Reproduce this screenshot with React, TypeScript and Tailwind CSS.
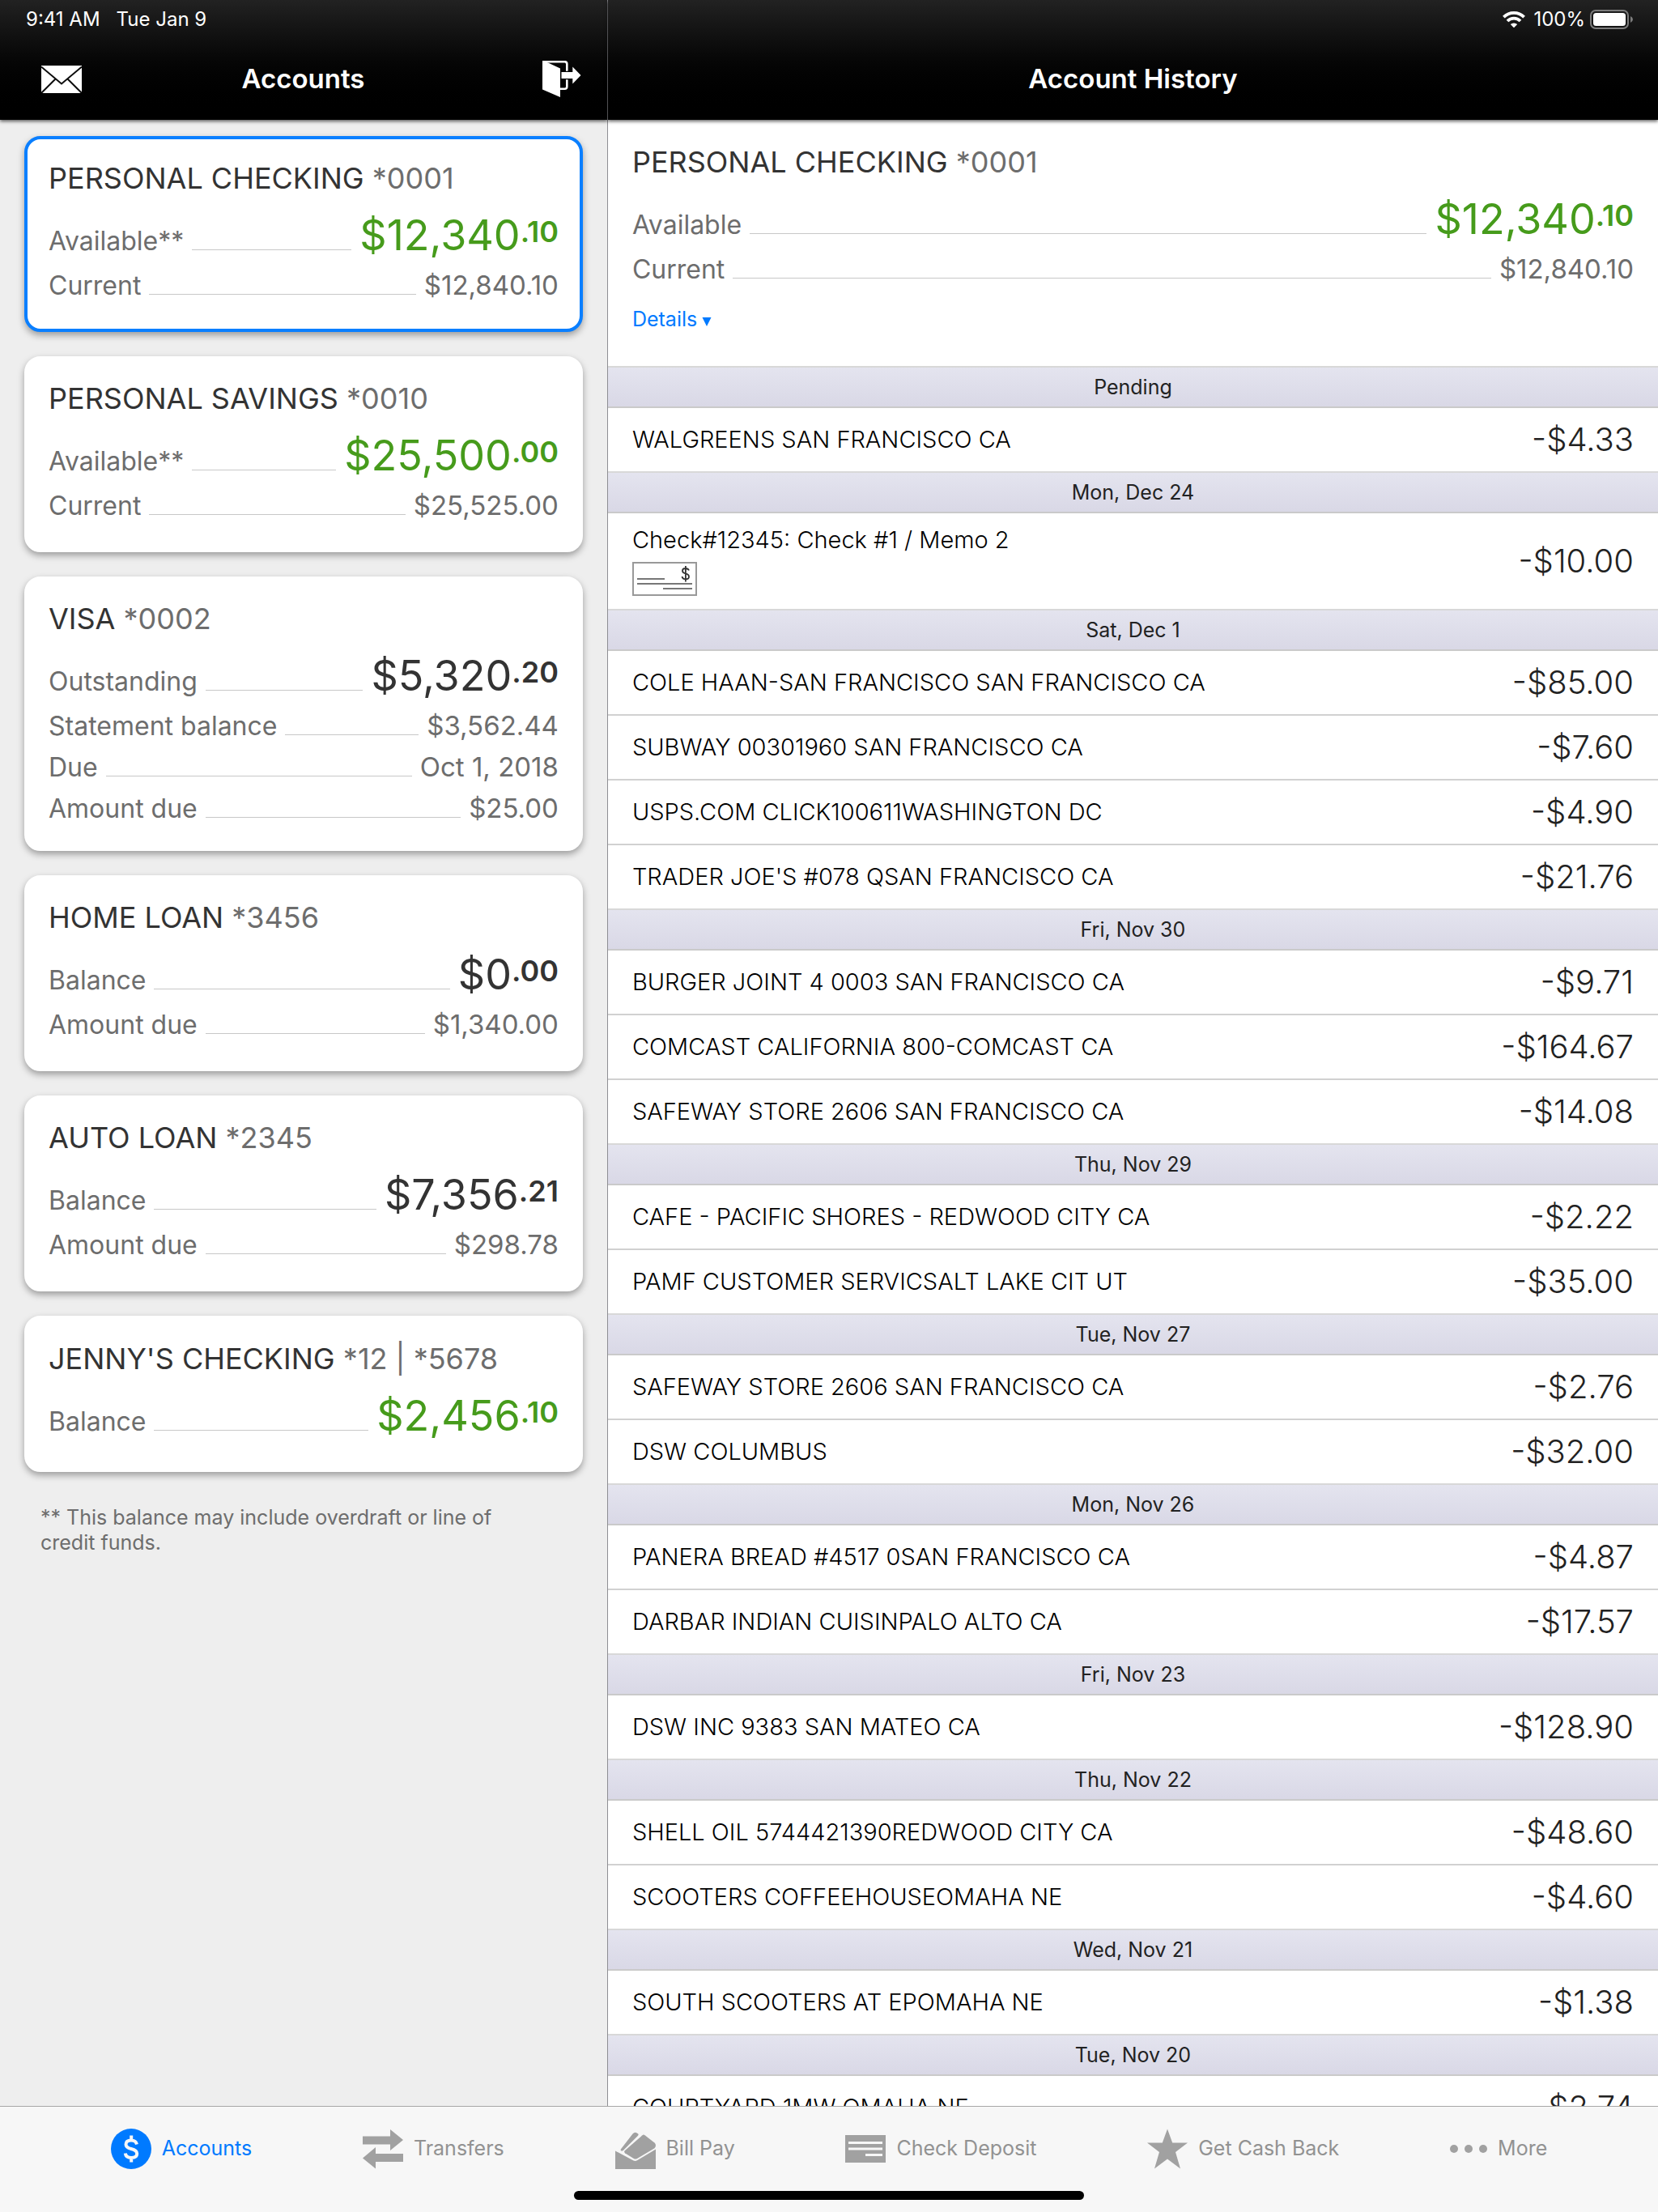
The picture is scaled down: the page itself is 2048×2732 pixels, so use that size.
import type { ReactNode } from 'react';

interface BalanceLine {
  label: string;
  value: string;
}

interface Account {
  id: string;
  name: string;
  mask: string;
  headline: { label: string; dollars: string; cents: string; positive: boolean };
  lines: BalanceLine[];
}

interface Transaction {
  description: string;
  amount: string;
  hasCheckImage?: boolean;
}

interface TransactionGroup {
  title: string;
  items: Transaction[];
}

const accounts: Account[] = [
  {
    id: 'checking',
    name: 'PERSONAL CHECKING',
    mask: '*0001',
    headline: { label: 'Available**', dollars: '$12,340', cents: '.10', positive: true },
    lines: [{ label: 'Current', value: '$12,840.10' }],
  },
  {
    id: 'savings',
    name: 'PERSONAL SAVINGS',
    mask: '*0010',
    headline: { label: 'Available**', dollars: '$25,500', cents: '.00', positive: true },
    lines: [{ label: 'Current', value: '$25,525.00' }],
  },
  {
    id: 'visa',
    name: 'VISA',
    mask: '*0002',
    headline: { label: 'Outstanding', dollars: '$5,320', cents: '.20', positive: false },
    lines: [
      { label: 'Statement balance', value: '$3,562.44' },
      { label: 'Due', value: 'Oct 1, 2018' },
      { label: 'Amount due', value: '$25.00' },
    ],
  },
  {
    id: 'home-loan',
    name: 'HOME LOAN',
    mask: '*3456',
    headline: { label: 'Balance', dollars: '$0', cents: '.00', positive: false },
    lines: [{ label: 'Amount due', value: '$1,340.00' }],
  },
  {
    id: 'auto-loan',
    name: 'AUTO LOAN',
    mask: '*2345',
    headline: { label: 'Balance', dollars: '$7,356', cents: '.21', positive: false },
    lines: [{ label: 'Amount due', value: '$298.78' }],
  },
  {
    id: 'jenny',
    name: "JENNY'S CHECKING",
    mask: '*12 | *5678',
    headline: { label: 'Balance', dollars: '$2,456', cents: '.10', positive: true },
    lines: [],
  },
];

const groups: TransactionGroup[] = [
  { title: 'Pending', items: [{ description: 'WALGREENS SAN FRANCISCO CA', amount: '-$4.33' }] },
  {
    title: 'Mon, Dec 24',
    items: [{ description: 'Check#12345: Check #1 / Memo 2', amount: '-$10.00', hasCheckImage: true }],
  },
  {
    title: 'Sat, Dec 1',
    items: [
      { description: 'COLE HAAN-SAN FRANCISCO SAN FRANCISCO CA', amount: '-$85.00' },
      { description: 'SUBWAY 00301960 SAN FRANCISCO CA', amount: '-$7.60' },
      { description: 'USPS.COM CLICK100611WASHINGTON DC', amount: '-$4.90' },
      { description: "TRADER JOE'S #078 QSAN FRANCISCO CA", amount: '-$21.76' },
    ],
  },
  {
    title: 'Fri, Nov 30',
    items: [
      { description: 'BURGER JOINT 4 0003 SAN FRANCISCO CA', amount: '-$9.71' },
      { description: 'COMCAST CALIFORNIA 800-COMCAST CA', amount: '-$164.67' },
      { description: 'SAFEWAY STORE 2606 SAN FRANCISCO CA', amount: '-$14.08' },
    ],
  },
  {
    title: 'Thu, Nov 29',
    items: [
      { description: 'CAFE - PACIFIC SHORES - REDWOOD CITY CA', amount: '-$2.22' },
      { description: 'PAMF CUSTOMER SERVICSALT LAKE CIT UT', amount: '-$35.00' },
    ],
  },
  {
    title: 'Tue, Nov 27',
    items: [
      { description: 'SAFEWAY STORE 2606 SAN FRANCISCO CA', amount: '-$2.76' },
      { description: 'DSW COLUMBUS', amount: '-$32.00' },
    ],
  },
  {
    title: 'Mon, Nov 26',
    items: [
      { description: 'PANERA BREAD #4517 0SAN FRANCISCO CA', amount: '-$4.87' },
      { description: 'DARBAR INDIAN CUISINPALO ALTO CA', amount: '-$17.57' },
    ],
  },
  { title: 'Fri, Nov 23', items: [{ description: 'DSW INC 9383 SAN MATEO CA', amount: '-$128.90' }] },
  {
    title: 'Thu, Nov 22',
    items: [
      { description: 'SHELL OIL 5744421390REDWOOD CITY CA', amount: '-$48.60' },
      { description: 'SCOOTERS COFFEEHOUSEOMAHA NE', amount: '-$4.60' },
    ],
  },
  { title: 'Wed, Nov 21', items: [{ description: 'SOUTH SCOOTERS AT EPOMAHA NE', amount: '-$1.38' }] },
  { title: 'Tue, Nov 20', items: [{ description: 'COURTYARD 1MW OMAHA NE', amount: '$2.74' }] },
];

function MailIcon() {
  return (
    <svg viewBox="0 0 50 34" className="h-[34px] w-[50px]" aria-hidden="true">
      <rect width="50" height="34" fill="#fff" />
      <path
        d="M0 1.5 L25 22.5 L50 1.5 M0 34 L17.5 16.5 M50 34 L32.5 16.5"
        fill="none"
        stroke="#0d0d0d"
        strokeWidth="2"
      />
    </svg>
  );
}

function SignOutIcon() {
  return (
    <svg viewBox="0 0 48 46" className="h-[46px] w-12" aria-hidden="true">
      <path d="M0 0 L7 2.4 L22 9.5 V45 L0 35.5 Z" fill="#fff" />
      <path
        d="M0 1.2 H27.5 Q30.3 1.2 30.3 4 V12.700 M30.3 23.3 V32 Q30.3 34.8 27.5 34.8 H22"
        fill="none"
        stroke="#fff"
        strokeWidth="2.6"
      />
      <path d="M23.5 14 H37.3 V7.5 L47.5 18 L37.3 28.5 V22 H23.5 Z" fill="#fff" />
    </svg>
  );
}

function WifiIcon() {
  return (
    <svg viewBox="0 0 28 20" className="h-5 w-7" fill="none" stroke="#fff" strokeWidth="3.8" aria-hidden="true">
      <path d="M1.400 7.200 A17.8 17.8 0 0 1 26.600 7.200" />
      <path d="M6 12 A11.3 11.3 0 0 1 22 12" />
      <path d="M14 20.300 L9.800 16.100 A6 6 0 0 1 18.200 16.100 Z" fill="#fff" stroke="none" />
    </svg>
  );
}

function BatteryIcon() {
  return (
    <svg viewBox="0 0 54 24" className="h-6 w-[54px]" aria-hidden="true">
      <rect x="1" y="1" width="46" height="22" rx="6" fill="none" stroke="#7c7c7c" strokeWidth="2" />
      <rect x="4" y="4" width="40" height="16" rx="3.5" fill="#fff" />
      <path d="M50 8 Q53 9.500 53 12 Q53 14.500 50 16 Z" fill="#7c7c7c" />
    </svg>
  );
}

function CheckImageIcon() {
  return (
    <svg viewBox="0 0 80 42" className="h-[42px] w-20" aria-hidden="true">
      <rect x="1" y="1" width="78" height="40" fill="none" stroke="#999" strokeWidth="2" />
      <path d="M6 21 H40 M6 27 H74 M38 33 H74" stroke="#777" strokeWidth="2" />
      <path
        d="M70 10.500 Q69 8 65.500 8 Q62 8 62 11 Q62 13.500 65.800 14.300 Q70 15.200 70 18.200 Q70 21.300 66 21.300 Q62 21.300 61.500 18 M65.900 5 V24.500"
        fill="none"
        stroke="#333"
        strokeWidth="1.800"
      />
    </svg>
  );
}

function AccountsIcon() {
  return (
    <svg viewBox="0 0 50 50" className="size-[50px]" aria-hidden="true">
      <circle cx="25" cy="25" r="25" fill="#007aff" />
      <path
        d="M32 19.500 Q31 14.500 25 14.500 Q18.500 14.500 18.500 19.500 Q18.500 23.500 25 25 Q32.200 26.700 32.200 31 Q32.200 36 25.300 36 Q18.300 36 17.800 30.500 M25.200 8.500 V14.500 M25.200 36 V41.500"
        fill="none"
        stroke="#f7f7f7"
        strokeWidth="4"
      />
    </svg>
  );
}

function TransfersIcon() {
  return (
    <svg viewBox="0 0 50 50" className="size-[50px]" fill="#a1a1a1" aria-hidden="true">
      <path d="M0 9.500 H34 V1 L50 14 L34 27 V19.500 H0 Z" />
      <path d="M50 31 H16 V23 L0 36.500 L16 49.500 V41 H50 Z" />
    </svg>
  );
}

function BillPayIcon() {
  return (
    <svg viewBox="0 0 50 50" className="size-[50px]" fill="#a1a1a1" aria-hidden="true">
      <path d="M0 27.500 L22.500 39.500 Q24.700 40.500 27 39.300 L50 25.500 V50 H0 Z" />
      <path d="M7.200 25 L21.500 6.500 Q24.500 3 28.300 6.500 Q29.200 7.600 28 8.800 L9.800 27 Q8 28.200 6.800 27 Q6.300 26 7.200 25 Z" />
      <path d="M12 27 L33.500 8.200 Q35 7 36.600 8.200 L48.500 17.500 Q51.500 20.500 48.500 24.200 L27 37 Q24.800 38.200 22.800 37 L12 30.200 Q10.200 28.600 12 27 Z" />
    </svg>
  );
}

function CheckDepositIcon() {
  return (
    <svg viewBox="0 0 50 34" className="h-[34px] w-[50px]" aria-hidden="true">
      <rect width="50" height="34" fill="#a1a1a1" />
      <path d="M4 9.500 H46 M4 17 H46 M25 24.500 H46" stroke="#f7f7f7" strokeWidth="3" />
    </svg>
  );
}

function StarIcon() {
  return (
    <svg viewBox="0 0 50 50" className="size-[50px]" fill="#a1a1a1" aria-hidden="true">
      <path d="M25 0.500 L31.200 17.500 H50 L35 29 L41 49.500 L25 37.500 L9 49.500 L15 29 L0 17.500 H18.800 Z" />
    </svg>
  );
}

function MoreIcon() {
  return (
    <svg viewBox="0 0 46 10" className="h-2.5 w-[46px]" fill="#a1a1a1" aria-hidden="true">
      <circle cx="5" cy="5" r="5" />
      <circle cx="23" cy="5" r="5" />
      <circle cx="41" cy="5" r="5" />
    </svg>
  );
}

const tabs: { label: string; icon: ReactNode; active?: boolean }[] = [
  { label: 'Accounts', icon: <AccountsIcon />, active: true },
  { label: 'Transfers', icon: <TransfersIcon /> },
  { label: 'Bill Pay', icon: <BillPayIcon /> },
  { label: 'Check Deposit', icon: <CheckDepositIcon /> },
  { label: 'Get Cash Back', icon: <StarIcon /> },
  { label: 'More', icon: <MoreIcon /> },
];

function Leader() {
  return <span className="h-px flex-1 bg-[#c8c8c8]" />;
}

function Balances({ account, headlineLabel }: { account: Account; headlineLabel?: string }) {
  const { headline, lines } = account;
  return (
    <>
      <span className="flex h-16 items-baseline gap-2.5 text-[#6d6d6d]">
        <span className="text-[32px] leading-[56px]">{headlineLabel ?? headline.label}</span>
        <Leader />
        <span
          className={
            headline.positive
              ? 'flex items-start text-[52px] leading-[56px] text-[#469b1b]'
              : 'flex items-start text-[52px] leading-[56px] text-[#333]'
          }
        >
          {headline.dollars}
          <span className="text-[36px] leading-[46px] font-semibold">{headline.cents}</span>
        </span>
      </span>
      {lines.map((line) => (
        <span key={line.label} className="flex h-[51px] items-baseline gap-2.5 text-[33px] leading-[51px] text-[#6d6d6d]">
          <span className="text-[32px]">{line.label}</span>
          <Leader />
          <span>{line.value}</span>
        </span>
      ))}
    </>
  );
}

function AccountTitle({ account }: { account: Account }) {
  return (
    <span className="block text-[36px] leading-[44px] text-[#333]">
      {account.name} <span className="text-[#6d6d6d]">{account.mask}</span>
    </span>
  );
}

function AccountCard({ account, selected }: { account: Account; selected: boolean }) {
  const border = selected ? 'border-[#0a7fff]' : 'border-white';
  const bottom = account.lines.length > 1 ? 'pb-[23px]' : 'pb-[28px]';
  return (
    <button
      type="button"
      aria-pressed={selected}
      className={`block min-h-[193px] w-full rounded-[20px] border-4 bg-white px-[26px] pt-[26px] text-left shadow-[0_4px_8px_rgba(0,0,0,0.35)] ${border} ${bottom}`}
    >
      <AccountTitle account={account} />
      <span className="mt-[21px] block">
        <Balances account={account} />
      </span>
    </button>
  );
}

function TransactionRow({ item }: { item: Transaction }) {
  return (
    <li className="flex items-center justify-between px-[30px] not-last:border-b-2 not-last:border-[#d1d1d1]">
      <div className={item.hasCheckImage ? 'pt-[9px] pb-4' : 'py-[15px]'}>
        <p className="text-[29px] leading-[48px] font-light text-black">{item.description}</p>
        {item.hasCheckImage && (
          <button type="button" aria-label="View check" className="mt-[3px] block">
            <CheckImageIcon />
          </button>
        )}
      </div>
      <span className="text-[40px] leading-[48px] font-light text-[#222]">{item.amount}</span>
    </li>
  );
}

export default function App() {
  const current = accounts[0];

  return (
    <div className="flex h-screen flex-col overflow-hidden bg-white font-[Inter,'Liberation_Sans',sans-serif]">
      <div className="grid min-h-0 flex-1 grid-cols-[11fr_19fr]">
        <aside className="flex min-h-0 min-w-0 flex-col border-r border-[#8e8e93] bg-[#eee]">
          <header className="z-10 h-[148px] shrink-0 bg-linear-to-b from-[#222] to-black text-white shadow-[0_2px_4px_rgba(0,0,0,0.6)]">
            <div className="flex h-12 items-center gap-5 px-8 text-[24px]">
              <span>9:41 AM</span>
              <span>Tue Jan 9</span>
            </div>
            <div className="grid h-[100px] grid-cols-[1fr_auto_1fr] items-center pr-8 pl-[51px]">
              <button type="button" aria-label="Messages" className="justify-self-start">
                <MailIcon />
              </button>
              <h1 className="mr-5 text-[33px] font-semibold">Accounts</h1>
              <button type="button" aria-label="Sign out" className="justify-self-end">
                <SignOutIcon />
              </button>
            </div>
          </header>
          <div className="flex flex-col gap-[30px] overflow-hidden px-[30px] pt-5">
            {accounts.map((account) => (
              <AccountCard key={account.id} account={account} selected={account.id === current.id} />
            ))}
            <p className="pt-[11px] pr-16 pl-5 text-[25px] leading-[31px] text-[#6d6d6d]">
              ** This balance may include overdraft or line of credit funds.
            </p>
          </div>
        </aside>

        <main className="flex min-h-0 min-w-0 flex-col">
          <header className="z-10 h-[148px] shrink-0 bg-linear-to-b from-[#222] to-black text-white shadow-[0_2px_4px_rgba(0,0,0,0.6)]">
            <div className="flex h-12 items-center justify-end px-[30px] text-[24px]">
              <WifiIcon />
              <span className="mr-1.5 ml-2.5">100%</span>
              <BatteryIcon />
            </div>
            <div className="flex h-[100px] items-center justify-center">
              <h2 className="text-[33px] font-semibold">Account History</h2>
            </div>
          </header>
          <div className="min-h-0 flex-1 overflow-hidden">
            <section className="px-[30px] pt-[30px] pb-[40px]">
              <AccountTitle account={current} />
              <div className="mt-[21px]">
                <Balances account={current} headlineLabel="Available" />
              </div>
              <button type="button" className="mt-[18px] flex h-9 items-baseline gap-1.5 text-[25px] leading-9 text-[#007aff]">
                Details
                <svg viewBox="0 0 12 12" className="size-3" fill="currentColor" aria-hidden="true">
                  <path d="M0.500 1 H11.500 L6 12 Z" />
                </svg>
              </button>
            </section>
            {groups.map((group) => (
              <section key={group.title}>
                <h3 className="border-t-2 border-b-2 border-t-[#d8d8d8] border-b-[#cacaca] bg-linear-to-b from-[#e4e4ef] to-[#d9d8e6] text-center text-[25px] leading-[48px] text-[#222]">
                  {group.title}
                </h3>
                <ul>
                  {group.items.map((item) => (
                    <TransactionRow key={item.description} item={item} />
                  ))}
                </ul>
              </section>
            ))}
          </div>
        </main>
      </div>

      <footer className="shrink-0 border-t border-[#a7a7a7] bg-[#f7f7f7]">
        <nav className="flex h-[104px] items-center justify-evenly">
          {tabs.map((tab) => (
            <a
              key={tab.label}
              href="#"
              aria-current={tab.active ? 'page' : undefined}
              className={
                tab.active
                  ? 'flex items-center gap-[13px] text-[25px] text-[#007aff]'
                  : 'flex items-center gap-[13px] text-[25px] text-[#929292]'
              }
            >
              {tab.icon}
              {tab.label}
            </a>
          ))}
        </nav>
        <div className="mx-auto mb-[15px] h-[11px] w-[630px] rounded-full bg-black" />
      </footer>
    </div>
  );
}
